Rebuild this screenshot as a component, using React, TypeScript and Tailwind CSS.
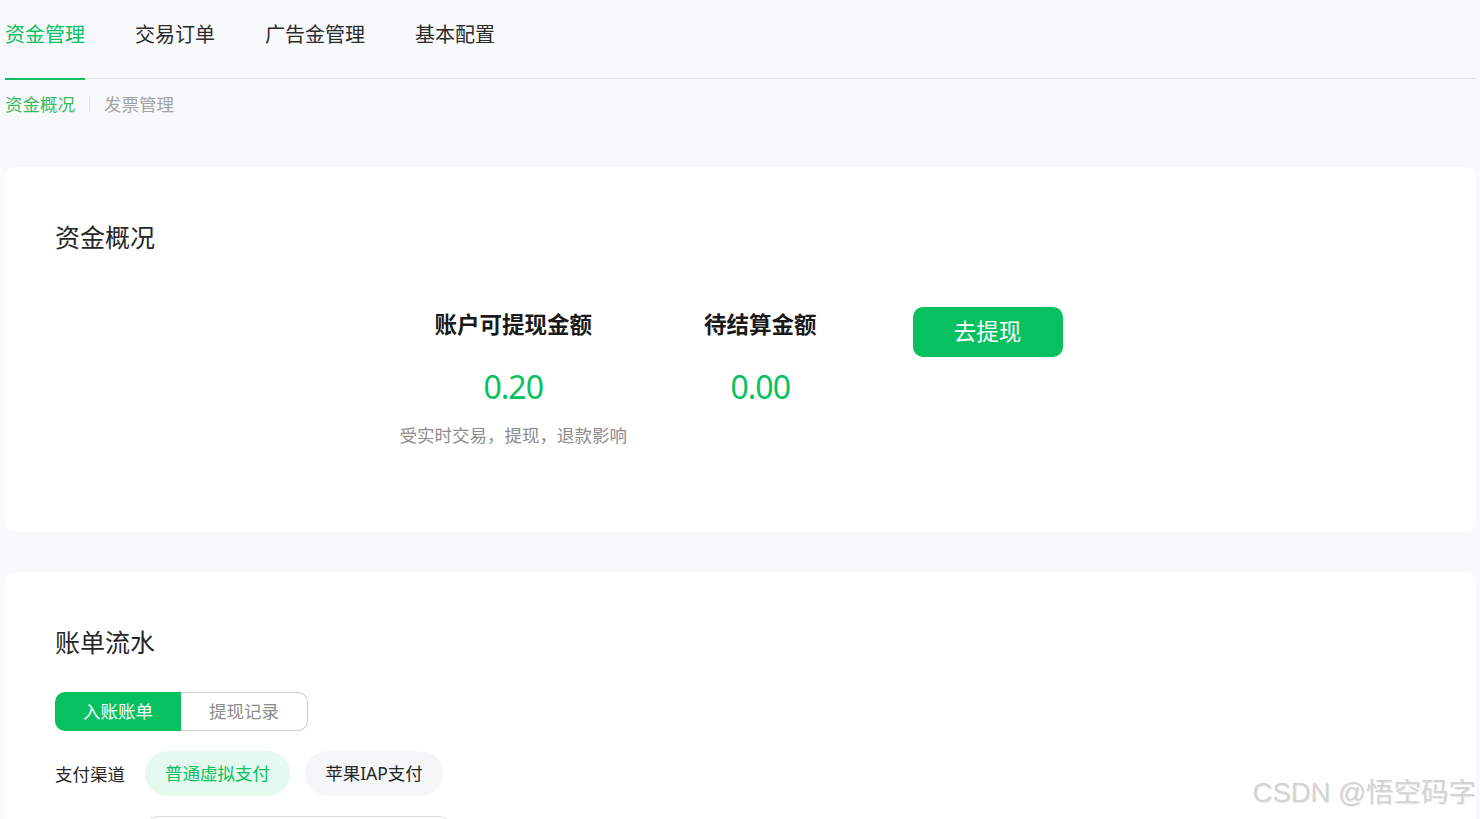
const font = { fontFamily: '"Noto Sans", "Noto Sans CJK SC", sans-serif' }

const navItems = ["资金管理", "交易订单", "广告金管理", "基本配置"]

function Stat({ title, value, hint }: { title: string; value: string; hint?: string }) {
  return (
    <div className="flex flex-col items-center">
      <div className="h-[36px] text-[22.5px] leading-[36px] font-bold text-[#1a1a1a]">{title}</div>
      <div className="mt-[21px] h-[46px] text-[32px] leading-[46px] tracking-[-1px] text-[#07c160]">{value}</div>
      {hint && <div className="mt-[11px] text-[17.5px] leading-[28px] text-[#8c8c8c]">{hint}</div>}
    </div>
  )
}

export default function App() {
  return (
    <div className="relative h-[819px] overflow-hidden bg-[#f8f9fb] pl-[5px] pr-[4px]" style={font}>
      {/* top nav */}
      <div className="flex h-[79px] gap-[50px] border-b border-[#e0e0e0]">
        {navItems.map((item, i) => (
          <div
            key={item}
            className={
              i === 0
                ? "h-[80px] border-b-2 border-[#07c160] pt-[18px] text-[20px] leading-[34px] text-[#07c160]"
                : "pt-[18px] text-[20px] leading-[34px] text-[#2b2b2b]"
            }
          >
            {item}
          </div>
        ))}
      </div>

      {/* sub nav */}
      <div className="mt-[11px] mb-[49px] flex h-[28px] items-center text-[17.5px]">
        <span className="text-[#3cb95c]">资金概况</span>
        <span className="mx-[14px] h-[16px] w-px bg-[#e0e0e0]"></span>
        <span className="text-[#a3a3a3]">发票管理</span>
      </div>

      {/* overview card */}
      <div className="h-[365px] rounded-[10px] bg-white px-[50px] pt-[50px]">
        <h2 className="text-[25px] leading-[40px] font-normal text-[#262626]">资金概况</h2>
        <div className="mt-[50px] flex justify-center pr-[19px]">
          <Stat title="账户可提现金额" value="0.20" hint="受实时交易，提现，退款影响" />
          <div className="ml-[77px]">
            <Stat title="待结算金额" value="0.00" />
          </div>
          <button className="ml-[96px] h-[50px] w-[150px] rounded-[10px] bg-[#07c160] text-[22.5px] text-white">
            去提现
          </button>
        </div>
      </div>

      {/* bill card */}
      <div className="mt-[40px] h-[400px] rounded-[10px] bg-white px-[50px] pt-[50px]">
        <h2 className="text-[25px] leading-[40px] font-normal text-[#262626]">账单流水</h2>
        <div className="mt-[30px] flex h-[39px] w-[253px] text-[17.5px]">
          <div className="flex w-[126px] items-center justify-center rounded-l-[10px] bg-[#07c160] text-white">
            入账账单
          </div>
          <div className="flex flex-1 items-center justify-center rounded-r-[10px] border border-l-0 border-[#cccccc] text-[#8c8c8c]">
            提现记录
          </div>
        </div>
        <div className="mt-[20px] flex items-center text-[17.5px]">
          <span className="mt-[1px] w-[90px] text-[#262626]">支付渠道</span>
          <div className="flex h-[45px] w-[145px] items-center justify-center rounded-full bg-[#e6f9ef] text-[#07c160]">
            普通虚拟支付
          </div>
          <div className="ml-[15px] flex h-[45px] w-[138px] items-center justify-center rounded-full bg-[#f5f6f8] text-[#262626]">
            苹果IAP支付
          </div>
        </div>
        <div className="mt-[20px] ml-[92px] h-[40px] w-[303px] rounded-[10px] border border-[#e0e0e0]"></div>
      </div>

      {/* watermark */}
      <div
        className="absolute right-[4px] bottom-[6px] text-[27.5px] leading-[40px] whitespace-nowrap text-[#d4d4d4] [text-shadow:1px_1px_1px_#e8e8e8] [font-family:'Liberation_Sans','Noto_Sans_CJK_SC',sans-serif]"
      >
        CSDN @悟空码字
      </div>
    </div>
  )
}
